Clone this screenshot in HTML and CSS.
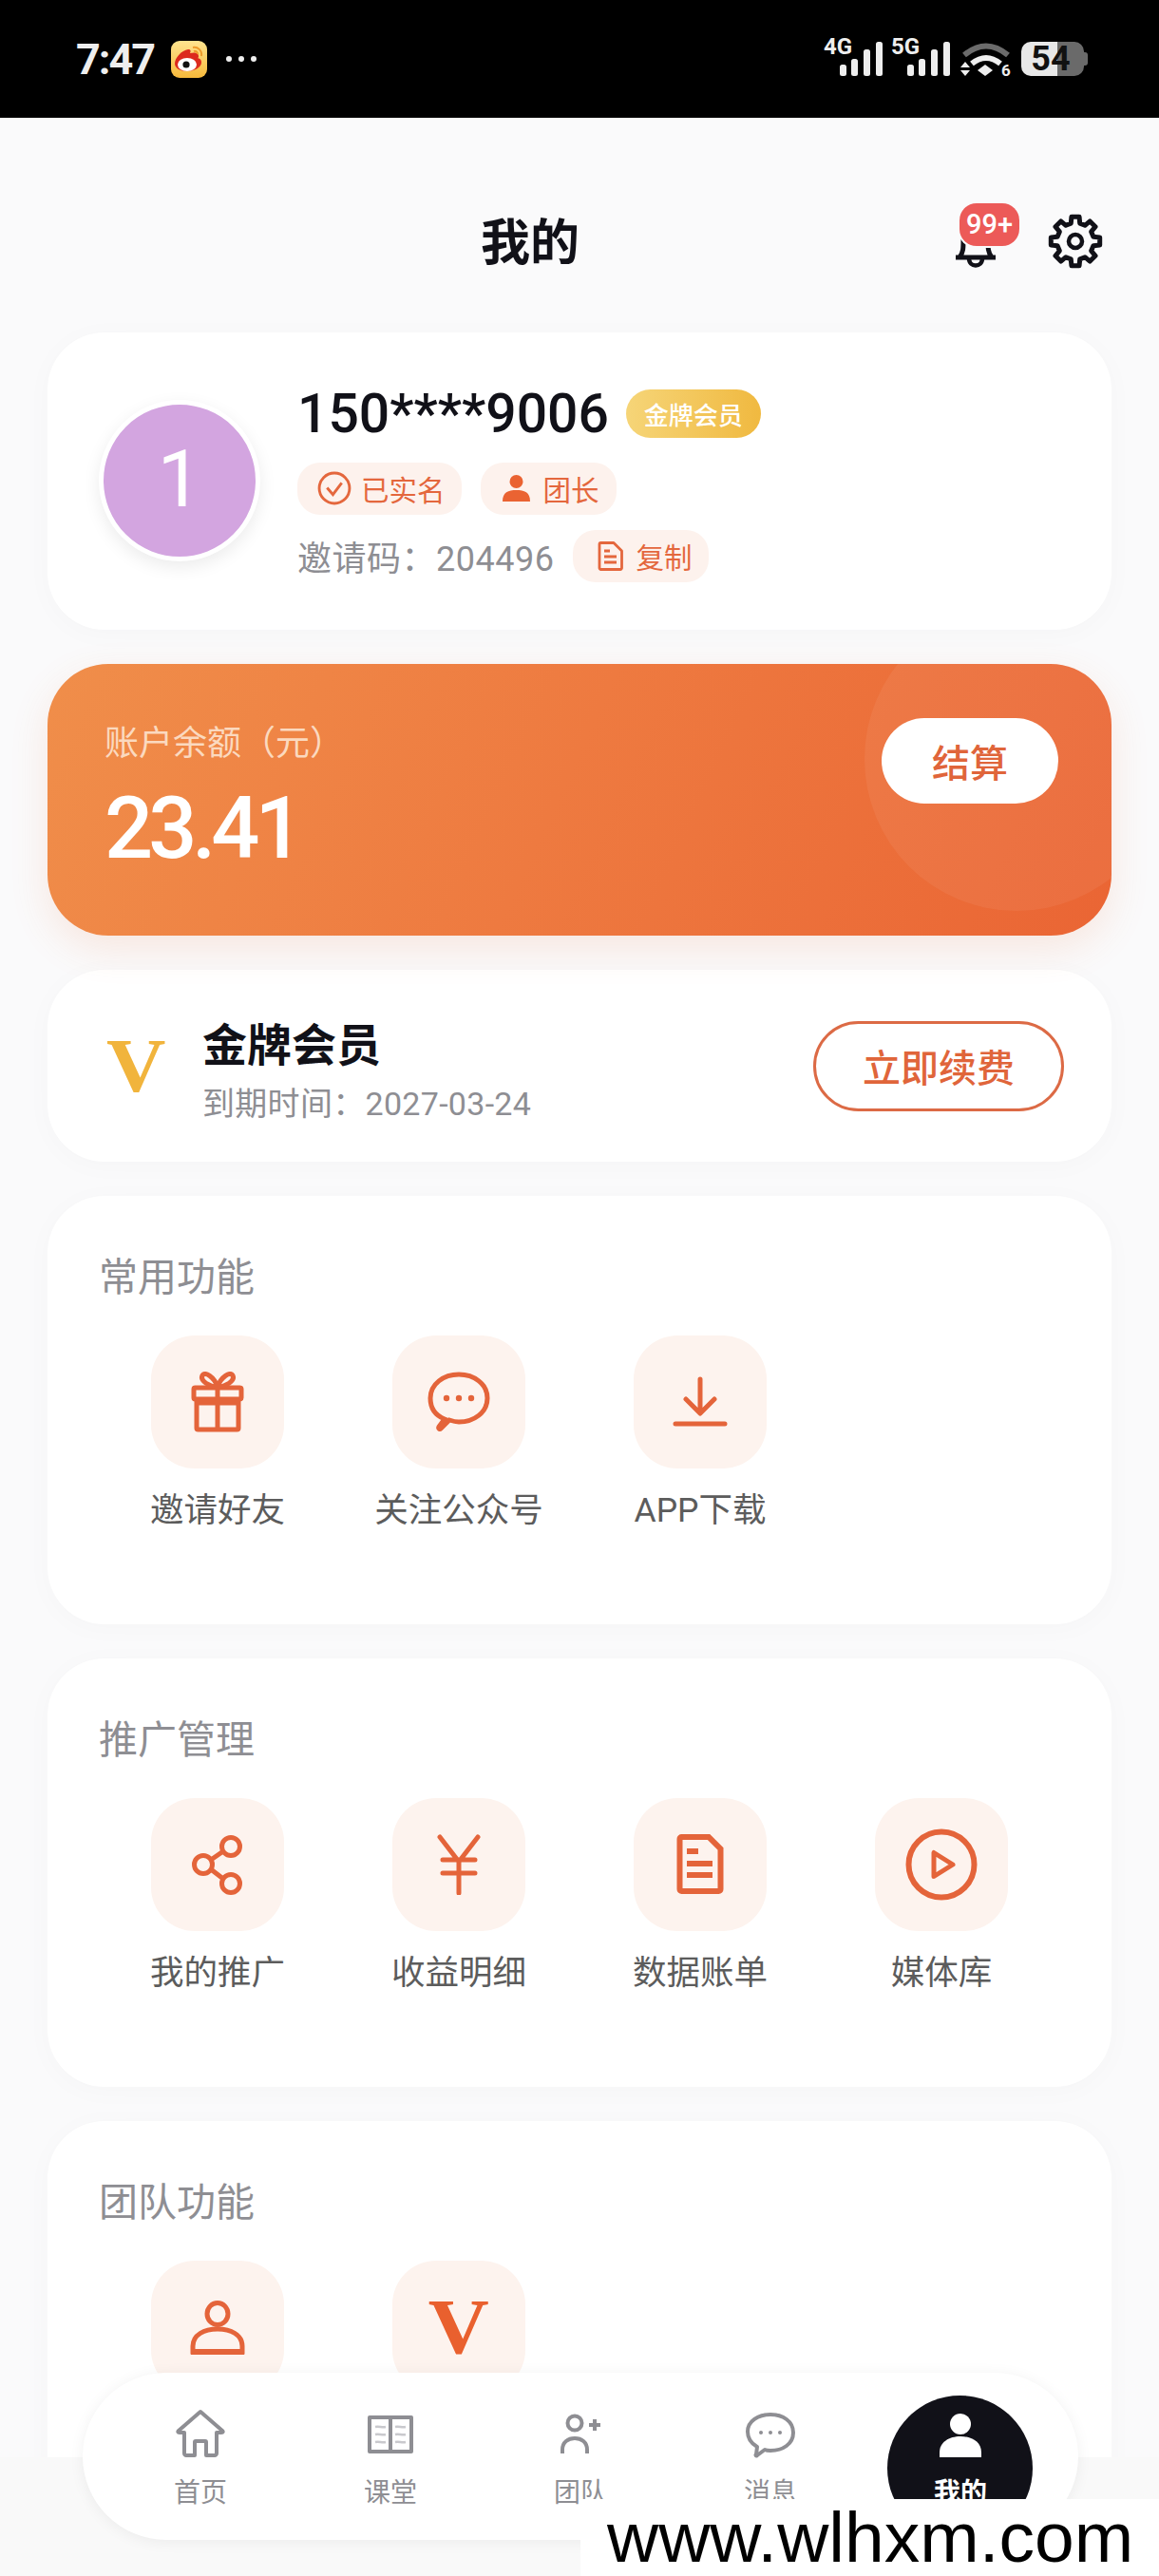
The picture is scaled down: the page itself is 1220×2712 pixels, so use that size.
FILE: index.html
```html
<!doctype html>
<html lang="zh-CN">
<head>
    <meta charset="UTF-8">
    <meta name="viewport" content="width=device-width, initial-scale=1.0">
    <title>我的</title>
    <link rel="stylesheet" href="styles.css">
</head>
<body>
<div class="phone">
    <!-- status bar -->
    <div class="status-bar">
        <div class="status-left">
            <span class="clock">7:47</span>
            <svg class="weibo" width="38" height="39" viewBox="0 0 38 39">
                <defs>
                    <linearGradient id="wbBg" x1="0" y1="0" x2="0" y2="1">
                        <stop offset="0" stop-color="#ffe48f"/>
                        <stop offset="1" stop-color="#f6b93b"/>
                    </linearGradient>
                </defs>
                <rect width="38" height="39" rx="9" fill="url(#wbBg)"/>
                <path d="M4 24c0-6 7-14 14-15 3 0 3 2 2 4 4-1 9-1 9 3 0 1 0 2-1 2 3 1 4 2 4 5 0 5-8 9-15 9-7 0-13-3-13-8z" fill="#dc2a1d"/>
                <ellipse cx="17" cy="25" rx="10" ry="7" fill="#fff"/>
                <circle cx="16" cy="25" r="3.6" fill="#111"/>
                <path d="M23 7c5-1 10 3 9 9M24 11c2-1 4 1 4 3" fill="none" stroke="#ee9a2a" stroke-width="2"/>
            </svg>
            <svg class="more-dots" width="34" height="8" viewBox="0 0 34 8">
                <circle cx="4" cy="4" r="3" fill="#eee"/>
                <circle cx="17" cy="4" r="3" fill="#eee"/>
                <circle cx="30" cy="4" r="3" fill="#eee"/>
            </svg>
        </div>
        <div class="status-right">
            <svg class="signal" width="64" height="50" viewBox="0 -8 64 50">
                <text x="0" y="15" class="signal-text">4G</text>
                <rect x="17" y="26" width="7" height="12" rx="2.5" fill="#eee"/>
                <rect x="29" y="20" width="7" height="18" rx="2.5" fill="#eee"/>
                <rect x="42" y="10" width="7" height="28" rx="2.5" fill="#eee"/>
                <rect x="55" y="2" width="7" height="36" rx="2.5" fill="#eee"/>
            </svg>
            <svg class="signal" width="64" height="50" viewBox="0 -8 64 50">
                <text x="0" y="15" class="signal-text">5G</text>
                <rect x="17" y="26" width="7" height="12" rx="2.5" fill="#eee"/>
                <rect x="29" y="20" width="7" height="18" rx="2.5" fill="#eee"/>
                <rect x="42" y="10" width="7" height="28" rx="2.5" fill="#eee"/>
                <rect x="55" y="2" width="7" height="36" rx="2.5" fill="#eee"/>
            </svg>
            <svg class="wifi" width="54" height="42" viewBox="0 0 54 42">
                <path d="M4 13Q27-6 50 13" fill="none" stroke="#6b6b6b" stroke-width="6"/>
                <path d="M12 22Q27 10 42 22" fill="none" stroke="#eee" stroke-width="6"/>
                <path d="M26 23l8 6-8 6-8-6z" fill="#eee"/>
                <path d="M5 20l5 6H0zM5 35l5-6H0z" fill="#eee"/>
                <text x="43" y="35" class="wifi-text">6</text>
            </svg>
            <div class="battery"><span>54</span></div>
        </div>
    </div>

    <!-- header -->
    <header class="top-bar">
        <h1 class="page-title">我的</h1>
        <div class="top-actions">
            <div class="bell">
                <svg width="50" height="58" viewBox="0 0 50 58">
                    <path d="M4 46H46M8 46c4-5 4-10 4-18C12 16 18 8 25 8s13 8 13 20c0 8 0 13 4 18" fill="none" stroke="#111118" stroke-width="5" stroke-linejoin="round"/>
                    <path d="M18 47c0 10 14 10 14 0" fill="none" stroke="#111118" stroke-width="4.5"/>
                </svg>
                <span class="bell-badge">99+</span>
            </div>
            <svg class="gear" width="60" height="60" viewBox="0 0 60 60">
                <polygon points="25.3,11.1 25.93,4.3 34.07,4.3 34.7,11.1 40.04,13.31 45.29,8.95 51.05,14.71 46.69,19.96 48.9,25.3 55.7,25.93 55.7,34.07 48.9,34.7 46.69,40.04 51.05,45.29 45.29,51.05 40.04,46.69 34.7,48.9 34.07,55.7 25.93,55.7 25.3,48.9 19.96,46.69 14.71,51.05 8.95,45.29 13.31,40.04 11.1,34.7 4.3,34.07 4.3,25.93 11.1,25.3 13.31,19.96 8.95,14.71 14.71,8.95 19.96,13.31" fill="none" stroke="#111118" stroke-width="5" stroke-linejoin="round"/>
                <circle cx="30" cy="30" r="7" fill="none" stroke="#111118" stroke-width="4.5"/>
            </svg>
        </div>
    </header>

    <main class="content">
        <!-- profile -->
        <section class="card profile">
            <div class="avatar">1</div>
            <div class="profile-info">
                <div class="profile-name">
                    <span class="phone-no">150****9006</span>
                    <span class="gold-badge">金牌会员</span>
                </div>
                <div class="tag-row">
                    <span class="tag tag-real">
                        <svg width="36" height="36" viewBox="0 0 35 35">
                            <circle cx="17.5" cy="17.5" r="15.5" fill="none" stroke="#e4673d" stroke-width="2.8"/>
                            <path d="M10 17l6 7 9-12" fill="none" stroke="#e4673d" stroke-width="2.8"/>
                        </svg>
                        已实名
                    </span>
                    <span class="tag tag-leader">
                        <svg width="29" height="28" viewBox="0 0 29 28">
                            <ellipse cx="14.5" cy="7" rx="7" ry="7" fill="#ea6332"/>
                            <path d="M0 28c0-10 6-12 14.5-12S29 18 29 28z" fill="#ea6332"/>
                        </svg>
                        团长
                    </span>
                </div>
                <div class="invite-row">
                    <span class="invite-code">邀请码：204496</span>
                    <span class="tag tag-copy">
                        <svg width="27" height="31" viewBox="0 0 27 31">
                            <path d="M2 3a1.500 1.500 0 0 1 1.500-1.500H17L25.500 10V28a1.500 1.500 0 0 1-1.500 1.500H3.500A1.500 1.500 0 0 1 2 28z" fill="none" stroke="#e4673d" stroke-width="2.8" stroke-linejoin="round"/>
                            <path d="M7 10h6M7 16h13M7 22h13" stroke="#e4673d" stroke-width="2.8"/>
                        </svg>
                        复制
                    </span>
                </div>
            </div>
        </section>

        <!-- balance -->
        <section class="balance">
            <div class="balance-circle"></div>
            <div class="balance-text">
                <div class="balance-label">账户余额（元）</div>
                <div class="balance-num">23.41</div>
            </div>
            <div class="settle-btn">结算</div>
        </section>

        <!-- vip -->
        <section class="card vip">
            <span class="vip-logo">V</span>
            <div class="vip-info">
                <div class="vip-name">金牌会员</div>
                <div class="vip-date">到期时间：2027-03-24</div>
            </div>
            <div class="renew-btn">立即续费</div>
        </section>

        <!-- 常用功能 -->
        <section class="card menu-card">
            <h2 class="menu-title">常用功能</h2>
            <div class="menu-grid">
                <div class="menu-item">
                    <div class="menu-icon">
                        <svg width="64" height="64" viewBox="0 0 64 64">
                            <rect x="7" y="17" width="50" height="12" rx="1.500" class="ico"/>
                            <path d="M10 33V59.500a1.500 1.500 0 0 0 1.500 1.500H52.500a1.500 1.500 0 0 0 1.500-1.500V33H10zM32 17V61" class="ico"/>
                            <path d="M32 16C24 16 13 10 16 4c3-4 12 1 16 12zM32 16C40 16 51 10 48 4c-3-4-12 1-16 12z" class="ico"/>
                        </svg>
                    </div>
                    <div class="menu-label">邀请好友</div>
                </div>
                <div class="menu-item">
                    <div class="menu-icon">
                        <svg width="68" height="66" viewBox="0 0 68 66">
                            <path d="M19 51C9 47 4 39 4 29 4 14 18 4 34 4s30 10 30 25-14 25-30 25c-4 0-7-1-10-2l-9 9c-1 1-3 0-2-2z" class="ico"/>
                            <circle cx="21" cy="29" r="3.200" class="ico-fill"/>
                            <circle cx="34" cy="29" r="3.200" class="ico-fill"/>
                            <circle cx="47" cy="29" r="3.200" class="ico-fill"/>
                        </svg>
                    </div>
                    <div class="menu-label">关注公众号</div>
                </div>
                <div class="menu-item">
                    <div class="menu-icon">
                        <svg width="64" height="64" viewBox="0 0 64 64">
                            <path d="M32 8V43M17 29L32 44 47 29M6 55H58" class="ico ico-round"/>
                        </svg>
                    </div>
                    <div class="menu-label">APP下载</div>
                </div>
            </div>
        </section>

        <!-- 推广管理 -->
        <section class="card menu-card">
            <h2 class="menu-title">推广管理</h2>
            <div class="menu-grid">
                <div class="menu-item">
                    <div class="menu-icon">
                        <svg width="64" height="64" viewBox="0 0 64 64">
                            <circle cx="46" cy="13" r="9.500" class="ico"/>
                            <circle cx="17" cy="32" r="9.500" class="ico"/>
                            <circle cx="46" cy="52" r="9.500" class="ico"/>
                            <path d="M25 27L38 18M25 37L38 47" class="ico"/>
                        </svg>
                    </div>
                    <div class="menu-label">我的推广</div>
                </div>
                <div class="menu-item">
                    <div class="menu-icon">
                        <svg width="64" height="64" viewBox="0 0 64 64">
                            <path d="M12 3L32 29 52 3M32 29V62M15 27H49M15 41H49" class="ico ico-round"/>
                        </svg>
                    </div>
                    <div class="menu-label">收益明细</div>
                </div>
                <div class="menu-item">
                    <div class="menu-icon">
                        <svg width="64" height="64" viewBox="0 0 64 64">
                            <path d="M10.500 5a2 2 0 0 1 2-2H41L53.500 15.500V58a2 2 0 0 1-2 2H12.500a2 2 0 0 1-2-2z" class="ico ico-thick"/>
                            <path d="M18 18H30M18 31H45M18 43H45" class="ico ico-thick"/>
                        </svg>
                    </div>
                    <div class="menu-label">数据账单</div>
                </div>
                <div class="menu-item">
                    <div class="menu-icon">
                        <svg width="80" height="80" viewBox="0 0 80 80">
                            <circle cx="40" cy="40" r="34.500" class="ico ico-thick"/>
                            <path d="M32 27.500V52.500L52 40z" class="ico ico-round"/>
                        </svg>
                    </div>
                    <div class="menu-label">媒体库</div>
                </div>
            </div>
        </section>

        <!-- 团队功能 -->
        <section class="card menu-card">
            <h2 class="menu-title">团队功能</h2>
            <div class="menu-grid">
                <div class="menu-item">
                    <div class="menu-icon">
                        <svg width="64" height="64" viewBox="0 0 64 64">
                            <ellipse cx="32" cy="18" rx="11" ry="11.500" class="ico"/>
                            <path d="M6 58V52C6 40 18 34 32 34s26 6 26 18v6z" class="ico"/>
                            <path d="M4 58H60" class="ico ico-thick"/>
                        </svg>
                    </div>
                    <div class="menu-label">我的团队</div>
                </div>
                <div class="menu-item">
                    <div class="menu-icon">
                        <span class="team-v">V</span>
                    </div>
                    <div class="menu-label">会员中心</div>
                </div>
            </div>
        </section>
    </main>

    <!-- tab bar -->
    <div class="tab-wrap">
        <nav class="tab-bar">
            <div class="tab-item">
                <svg width="60" height="60" viewBox="0 0 60 60">
                    <path d="M30 4L7 24c-1 1-1 2 1 2h5V48c0 1 1 2 2 2h9V36c0-1 1-1 1-1h10s1 0 1 1V50h9c1 0 2-1 2-2V26h5c2 0 2-1 1-2z" class="tab-ico"/>
                </svg>
                <span>首页</span>
            </div>
            <div class="tab-item">
                <svg width="60" height="60" viewBox="0 0 60 60">
                    <path d="M8 10H52V46H8zM30 10V46" class="tab-ico"/>
                    <path d="M14 20c4-1 7 1 11 0M14 28c4-1 7 1 11 0M14 36c4-1 7 1 11 0M35 20c4-1 7 1 11 0M35 28c4-1 7 1 11 0M35 36c4-1 7 1 11 0" fill="none" stroke="#c9c9cd" stroke-width="2.500"/>
                </svg>
                <span>课堂</span>
            </div>
            <div class="tab-item">
                <svg width="60" height="60" viewBox="0 0 60 60">
                    <ellipse cx="24" cy="16" rx="7.500" ry="7.500" class="tab-ico"/>
                    <path d="M11 48V44C11 36 17 32 24 32s13 4 13 12v4" class="tab-ico"/>
                    <path d="M45 12V24M39 18H51" class="tab-ico"/>
                </svg>
                <span>团队</span>
            </div>
            <div class="tab-item">
                <svg width="60" height="60" viewBox="0 0 60 60">
                    <path d="M16 41C9 37 6 31 6 25 6 14 17 7 30 7s24 7 24 19-11 19-24 19c-2 0-4 0-6-1l-8 6c-1 1-2 0-1-1z" class="tab-ico"/>
                    <circle cx="20" cy="26" r="2" fill="#8e8e93"/>
                    <circle cx="30" cy="26" r="2" fill="#8e8e93"/>
                    <circle cx="40" cy="26" r="2" fill="#8e8e93"/>
                </svg>
                <span>消息</span>
            </div>
            <div class="tab-item active">
                <svg width="60" height="60" viewBox="0 0 60 60">
                    <ellipse cx="30" cy="17" rx="11" ry="11" fill="#fff"/>
                    <path d="M8 52V47C8 36 18 30 30 30s22 6 22 17v5z" fill="#fff"/>
                </svg>
                <span>我的</span>
            </div>
        </nav>
    </div>

    <div class="watermark">www.wlhxm.com</div>
</div>
</body>
</html>
```

FILE: styles.css
```css
* {
    margin: 0;
    padding: 0;
    box-sizing: border-box;
}

body {
    font-family: Roboto, "Noto Sans CJK SC", sans-serif;
    background: #fafafa;
}

.phone {
    position: relative;
    width: 1220px;
    height: 2712px;
    overflow: hidden;
    background: #fafafb;
}

/* status bar */
.status-bar {
    display: flex;
    justify-content: space-between;
    align-items: flex-start;
    height: 124px;
    padding: 42px 76px 0 80px;
    background: #000;
}

.status-left {
    display: flex;
    align-items: center;
    height: 40px;
}

.clock {
    font-size: 45px;
    font-weight: 700;
    color: #eee;
    letter-spacing: -2px;
}

.weibo {
    margin-left: 18px;
}

.more-dots {
    margin-left: 19px;
}

.status-right {
    display: flex;
    align-items: flex-start;
}

.signal {
    margin: -8px 7px 0 0;
}

.signal-text {
    font-family: Roboto, sans-serif;
    font-size: 24px;
    font-weight: 700;
    fill: #eee;
}

.wifi {
    margin: 3px 10px 0 2px;
}

.wifi-text {
    font-family: Roboto, sans-serif;
    font-size: 17px;
    font-weight: 700;
    fill: #eee;
}

.battery {
    position: relative;
    width: 66px;
    height: 36px;
    margin: 2px 3px 0 0;
    padding-right: 4px;
    border-radius: 10px;
    background: linear-gradient(90deg, #e8e8e8 57%, #6a6a6a 57%);
    font-size: 36px;
    font-weight: 700;
    line-height: 36px;
    text-align: center;
    color: #111;
}

.battery::after {
    content: "";
    position: absolute;
    top: 11px;
    right: -4px;
    width: 4px;
    height: 14px;
    border-radius: 0 3px 3px 0;
    background: #6a6a6a;
}

/* header */
.top-bar {
    display: flex;
    justify-content: space-between;
    align-items: center;
    height: 226px;
    padding: 34px 58px 0 506px;
}

.page-title {
    margin-top: -5px;
    font-family: "Noto Sans CJK SC", sans-serif;
    font-size: 52px;
    font-weight: 700;
    color: #111118;
    line-height: 60px;
}

.top-actions {
    display: flex;
    align-items: center;
    gap: 50px;
}

.bell {
    position: relative;
    width: 50px;
    height: 58px;
}

.bell-badge {
    position: absolute;
    top: -11px;
    left: 8px;
    width: 63px;
    height: 45px;
    border-radius: 18px;
    background: #ec5a58;
    box-shadow: 0 0 0 2px #fafafb;
    font-size: 29px;
    font-weight: 500;
    line-height: 45px;
    text-align: center;
    color: #fff;
}

/* cards */
.content {
    display: flex;
    flex-direction: column;
    gap: 36px;
    padding: 0 50px;
}

.card {
    border-radius: 60px;
    background: #fff;
    box-shadow: 0 4px 30px rgba(0, 0, 0, 0.025);
}

/* profile */
.profile {
    display: flex;
    align-items: center;
    height: 313px;
    padding: 9px 0 0 54px;
}

.avatar {
    flex: none;
    width: 170px;
    height: 170px;
    margin: 0 39px 10px 0;
    border: 5px solid #fff;
    border-radius: 50%;
    background: #d3a5e0;
    box-shadow: 0 6px 18px rgba(0, 0, 0, 0.08);
    font-size: 84px;
    font-weight: 400;
    line-height: 158px;
    text-align: center;
    color: #fff;
}

.profile-info {
    display: flex;
    flex-direction: column;
}

.profile-name {
    display: flex;
    align-items: center;
    height: 51px;
    margin-bottom: 26px;
}

.phone-no {
    font-size: 57px;
    font-weight: 500;
    color: #111118;
}

.gold-badge {
    width: 142px;
    height: 51px;
    margin-left: 18px;
    border-radius: 26px;
    background: linear-gradient(90deg, #f6d578, #f0b940);
    font-family: "Noto Sans CJK SC", sans-serif;
    font-size: 26px;
    font-weight: 500;
    line-height: 51px;
    text-align: center;
    color: #fff;
}

.tag-row {
    display: flex;
    gap: 20px;
    margin-bottom: 16px;
}

.tag {
    display: flex;
    align-items: center;
    height: 55px;
    border-radius: 24px;
    background: #fdf2ed;
    font-family: "Noto Sans CJK SC", sans-serif;
    font-size: 29.5px;
    color: #e4673d;
}

.tag-real {
    gap: 10px;
    padding: 0 17px 0 21px;
}

.tag-leader {
    gap: 14px;
    padding: 0 18px 0 23px;
}

.tag-copy {
    gap: 13px;
    padding: 0 18px 0 26px;
}

.invite-row {
    display: flex;
    align-items: center;
    gap: 20px;
}

.invite-code {
    font-size: 36px;
    letter-spacing: 0.5px;
    color: #8e8e93;
}

/* balance */
.balance {
    position: relative;
    display: flex;
    justify-content: space-between;
    align-items: flex-start;
    height: 286px;
    padding: 57px 56px 0 60px;
    overflow: hidden;
    border-radius: 64px;
    background: linear-gradient(115deg, #f08e4a 0%, #ee7a40 48%, #ea6534 100%);
    box-shadow: 0 14px 40px rgba(236, 110, 60, 0.14);
}

.balance-circle {
    position: absolute;
    top: -60px;
    right: -60px;
    width: 320px;
    height: 320px;
    border-radius: 50%;
    background: rgba(255, 255, 255, 0.06);
}

.balance-text {
    position: relative;
}

.balance-label {
    margin-top: 3px;
    font-family: "Noto Sans CJK SC", sans-serif;
    font-size: 36px;
    line-height: 40px;
    color: #fbd9bf;
}

.balance-num {
    margin-top: 24px;
    font-size: 90px;
    font-weight: 500;
    line-height: 100px;
    letter-spacing: -5px;
    color: #fff;
}

.settle-btn {
    position: relative;
    width: 186px;
    height: 90px;
    border-radius: 45px;
    background: #fff;
    font-family: "Noto Sans CJK SC", sans-serif;
    font-size: 40px;
    font-weight: 500;
    line-height: 90px;
    text-align: center;
    color: #e0653a;
}

/* vip */
.vip {
    display: flex;
    align-items: center;
    height: 202px;
    padding: 0 50px 0 62px;
}

.vip-logo {
    width: 101px;
    font-family: "Liberation Serif", serif;
    font-size: 80px;
    font-weight: 700;
    line-height: 90px;
    color: #f1b43c;
    transform: scaleX(1.08);
    transform-origin: left center;
}

.vip-info {
    flex: 1;
    margin-top: 8px;
}

.vip-name {
    font-family: "Noto Sans CJK SC", sans-serif;
    font-size: 47px;
    font-weight: 700;
    line-height: 56px;
    color: #111118;
}

.vip-date {
    margin-top: 16px;
    font-size: 34px;
    letter-spacing: 0.3px;
    line-height: 42px;
    color: #8e8e93;
}

.renew-btn {
    width: 264px;
    height: 95px;
    border: 3px solid #dc6a45;
    border-radius: 48px;
    font-family: "Noto Sans CJK SC", sans-serif;
    font-size: 40px;
    font-weight: 500;
    line-height: 89px;
    text-align: center;
    color: #e0653a;
}

/* menu cards */
.menu-card {
    padding: 54px 52px 96px;
}

.menu-title {
    padding-left: 2px;
    font-family: "Noto Sans CJK SC", sans-serif;
    font-size: 41px;
    font-weight: 400;
    line-height: 56px;
    color: #8e8e93;
}

.menu-grid {
    display: grid;
    grid-template-columns: repeat(4, 254px);
    margin-top: 37px;
}

.menu-item {
    display: flex;
    flex-direction: column;
    align-items: center;
    gap: 20px;
}

.menu-icon {
    display: flex;
    justify-content: center;
    align-items: center;
    width: 140px;
    height: 140px;
    border-radius: 46px;
    background: #fdf3ee;
}

.menu-label {
    font-size: 35.5px;
    line-height: 48px;
    color: #5c5c5c;
}

.ico {
    fill: none;
    stroke: #e4643a;
    stroke-width: 5;
}

.ico-thick {
    stroke-width: 6;
}

.ico-round {
    stroke-width: 5;
    stroke-linecap: round;
    stroke-linejoin: round;
}

.ico-fill {
    fill: #e4643a;
}

.team-v {
    font-family: "Liberation Serif", serif;
    font-size: 82px;
    font-weight: 700;
    line-height: 90px;
    color: #e9602e;
    transform: scaleX(1.08);
}

/* tab bar */
.tab-wrap {
    position: absolute;
    left: 0;
    bottom: 0;
    width: 100%;
    height: 125px;
    background: #f9f9f9;
}

.tab-bar {
    position: absolute;
    top: -89px;
    left: 87px;
    display: flex;
    width: 1048px;
    height: 176px;
    padding: 37px 24px 0;
    border-radius: 88px;
    background: #fff;
    box-shadow: 0 2px 16px rgba(0, 0, 0, 0.06);
}

.tab-item {
    position: relative;
    display: flex;
    flex-direction: column;
    align-items: center;
    gap: 7px;
    width: 200px;
    font-family: "Noto Sans CJK SC", sans-serif;
    font-size: 28px;
    line-height: 40px;
    color: #8e8e93;
}

.tab-item svg,
.tab-item span {
    position: relative;
}

.tab-ico {
    fill: none;
    stroke: #8e8e93;
    stroke-width: 4;
    stroke-linejoin: round;
}

.tab-item.active {
    font-weight: 700;
    color: #fff;
}

.tab-item.active::before {
    content: "";
    position: absolute;
    top: -13px;
    left: 23px;
    width: 153px;
    height: 153px;
    border-radius: 50%;
    background: #111118;
}

/* watermark */
.watermark {
    position: absolute;
    left: 611px;
    right: 0;
    bottom: 0;
    height: 81px;
    padding-left: 28px;
    background: #fff;
    font-family: "Liberation Sans", sans-serif;
    font-size: 75px;
    line-height: 81px;
    color: #000;
}
```
